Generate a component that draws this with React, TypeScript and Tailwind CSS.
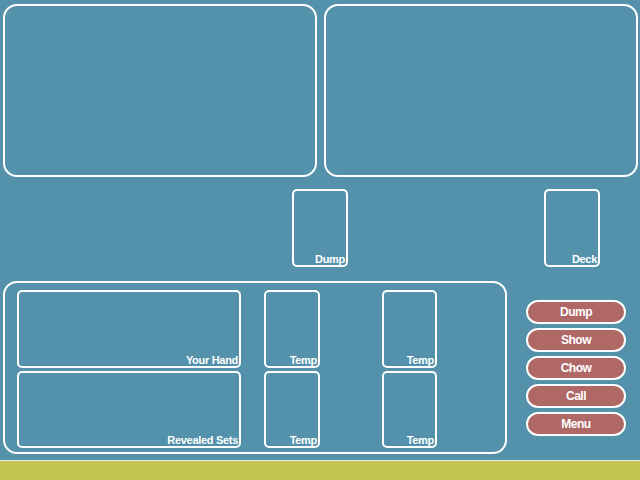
import React from 'react';

// Slot: an empty outlined card area with a label in the bottom-right corner
const Slot: React.FC<{ label: string; className: string }> = ({ label, className }) => (
  <div className={`shrink-0 flex flex-col justify-end items-end border-2 border-white rounded-[5px] pr-[1px] ${className}`}>
    <span className="text-[11px] leading-none font-bold text-white tracking-[-0.3px]">{label}</span>
  </div>
);

const actions = ['Dump', 'Show', 'Chow', 'Call', 'Menu'];

export default function App() {
  return (
    <div
      className="w-[640px] h-[480px] bg-[#5492ab] flex flex-col overflow-hidden"
      style={{ fontFamily: '"Liberation Sans", Arial, sans-serif' }}
    >
      {/* opponents */}
      <div className="flex gap-[7px] pt-[4px] pl-[3px]">
        <div className="w-[314px] h-[173px] border-2 border-white rounded-[14px]" />
        <div className="w-[314px] h-[173px] border-2 border-white rounded-[14px]" />
      </div>

      {/* discard + deck */}
      <div className="flex mt-[12px] h-[78px]">
        <Slot label="Dump" className="ml-[292px] w-[56px] h-[78px]" />
        <Slot label="Deck" className="ml-[196px] w-[56px] h-[78px]" />
      </div>

      {/* player area */}
      <div className="flex mt-[14px]">
        <div className="ml-[3px] w-[504px] h-[173px] border-2 border-white rounded-[14px] pl-[12px] pt-[7px] flex flex-col gap-[3px]">
          <div className="flex h-[78px]">
            <Slot label="Your Hand" className="w-[224px]" />
            <Slot label="Temp" className="ml-[23px] w-[56px]" />
            <Slot label="Temp" className="ml-[62px] w-[55px]" />
          </div>
          <div className="flex h-[77px]">
            <Slot label="Revealed Sets" className="w-[224px]" />
            <Slot label="Temp" className="ml-[23px] w-[56px]" />
            <Slot label="Temp" className="ml-[62px] w-[55px]" />
          </div>
        </div>

        <div className="ml-[19px] mt-[19px] flex flex-col gap-[4px]">
          {actions.map((a) => (
            <button
              key={a}
              className="w-[100px] h-[24px] rounded-full border-2 border-white bg-[#b06866] text-white text-[12px] font-bold tracking-[-0.5px] leading-none"
            >
              {a}
            </button>
          ))}
        </div>
      </div>

      {/* status bar */}
      <div className="mt-auto h-[20px] border-t border-[#e8eef0] bg-[#c4c452]" />
    </div>
  );
}
